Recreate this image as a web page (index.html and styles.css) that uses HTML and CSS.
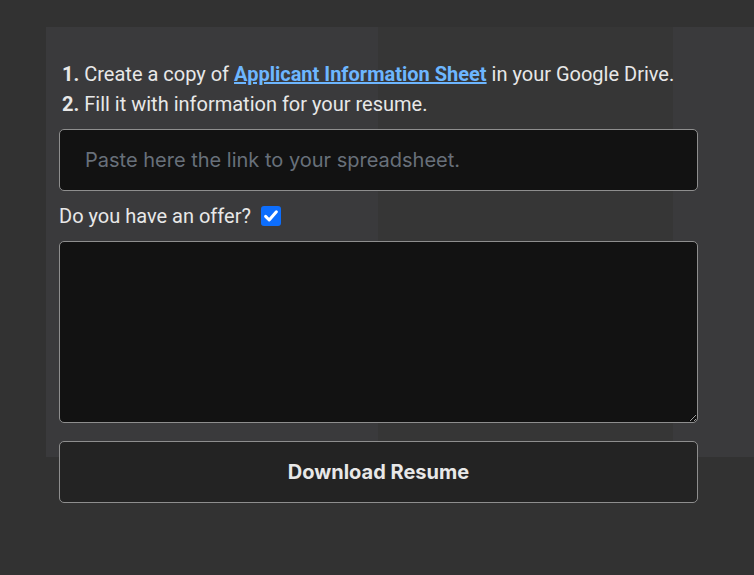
FILE: index.html
```html
<!DOCTYPE html>
<html lang="en">
<head>
<meta charset="utf-8">
<title>Resume</title>
<link rel="stylesheet" href="styles.css">
</head>
<body>
<main class="panel">
  <ol class="steps">
    <li><b>1.</b> Create a copy of <a class="link" href="#">Applicant Information Sheet</a> in your Google Drive.</li>
    <li><b>2.</b> Fill it with information for your resume.</li>
  </ol>
  <input class="field" type="text" placeholder="Paste here the link to your spreadsheet.">
  <label class="offer">
    <span>Do you have an offer?</span>
    <span class="check">
      <svg viewBox="0 0 20 20" width="20" height="20"><path d="M4.6 10.4l3.6 3.6L15.4 5.8" fill="none" stroke="#fff" stroke-width="3" stroke-linecap="round" stroke-linejoin="round"/></svg>
    </span>
  </label>
  <textarea class="area"></textarea>
  <button class="download" type="button">Download Resume</button>
</main>
</body>
</html>
```

FILE: styles.css
```css
html, body {
  margin: 0;
  padding: 0;
}
body {
  background: #323232;
  font-family: Roboto, "Liberation Sans", sans-serif;
  color: #e8e8e8;
  min-height: 575px;
  overflow: hidden;
}
.panel {
  margin: 27px 0 0 46px;
  padding: 32px 56px 0 13px;
  display: flex;
  flex-direction: column;
  background-image: linear-gradient(to right, #3a3a3c 0 332px, #363636 332px 627px, #3a3a3c 627px);
  background-size: 100% 430px;
  background-repeat: no-repeat;
}
.steps {
  list-style: none;
  margin: 0 0 10px 0;
  padding: 0 0 0 3px;
  font-size: 20px;
  line-height: 30px;
}
.steps b {
  font-weight: 700;
}
.link {
  color: #6db6ff;
  font-weight: 700;
  text-decoration: underline;
}
.field {
  box-sizing: border-box;
  height: 62px;
  width: 100%;
  margin: 0;
  padding: 0 25px;
  background: #121212;
  border: 1px solid #8e8e8e;
  border-radius: 5px;
  font-family: Inter, Roboto, sans-serif;
  font-size: 20px;
  color: #e8e8e8;
  outline: none;
}
.field::placeholder {
  color: #68707a;
}
.offer {
  display: flex;
  align-items: center;
  gap: 10px;
  height: 50px;
  font-size: 20px;
}
.check {
  width: 20px;
  height: 20px;
  border-radius: 3px;
  background: #0d6efd;
  display: flex;
}
.area {
  box-sizing: border-box;
  display: block;
  width: 100%;
  height: 182px;
  margin: 0;
  background: #121212;
  border: 1px solid #8e8e8e;
  border-radius: 5px;
  color: #e8e8e8;
  outline: none;
}
.download {
  box-sizing: border-box;
  margin-top: 18px;
  height: 62px;
  width: 100%;
  background: #232323;
  border: 1px solid #8e8e8e;
  border-radius: 5px;
  color: #e8e8e8;
  font-family: Inter, Roboto, sans-serif;
  font-weight: 700;
  font-size: 20px;
}
```
